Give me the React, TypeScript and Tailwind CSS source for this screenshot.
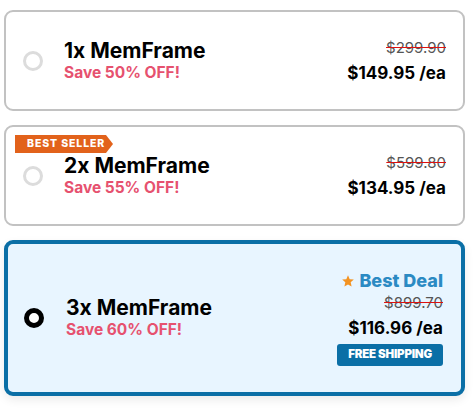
import React from "react";

type Offer = {
  qty: string;
  save: string;
  was: string;
  price: string;
  badge?: boolean;
  best?: boolean;
};

const offers: Offer[] = [
  { qty: "1x MemFrame", save: "Save 50% OFF!", was: "$299.90", price: "$149.95" },
  { qty: "2x MemFrame", save: "Save 55% OFF!", was: "$599.80", price: "$134.95", badge: true },
  { qty: "3x MemFrame", save: "Save 60% OFF!", was: "$899.70", price: "$116.96", best: true },
];

const Star = () => (
  <svg width="14" height="14" viewBox="0 0 24 24" className="mr-[4px]">
    <path d="M12 2l2.9 6.9 7.1.6-5.4 4.7 1.6 7.3L12 17.8 5.8 21.5l1.6-7.3L2 9.5l7.1-.6z" fill="#f39322" />
  </svg>
);

const OfferCard = ({ offer }: { offer: Offer }) => {
  const selected = !!offer.best;
  return (
    <div
      className={
        selected
          ? "relative flex h-[156px] items-center rounded-[9px] border-[4px] border-[#0b6fa6] bg-[#e8f5ff] pl-[16px] pr-[18px] shadow-[0_4px_10px_rgba(0,0,0,0.08)]"
          : "relative flex h-[101px] items-center rounded-[9px] border-2 border-[#c2c2c2] bg-white pl-[17px] pr-[17px]"
      }
    >
      {offer.badge && (
        <div className="absolute left-[9px] top-[8px] flex h-[18px] w-[98px] items-center bg-[#e2621b] pl-[12px] text-[10.5px] font-extrabold tracking-[0.9px] text-white [clip-path:polygon(0_0,91px_0,98px_50%,91px_100%,0_100%)]">
          BEST SELLER
        </div>
      )}
      <div
        className={
          selected
            ? "h-[20px] w-[20px] shrink-0 rounded-full border-[5px] border-black bg-white"
            : "h-[20px] w-[20px] shrink-0 rounded-full border-[3px] border-[#dcdcdc] bg-white"
        }
      />
      <div className={selected ? "ml-[22px] flex flex-col" : "ml-[21px] flex flex-col"}>
        <div className="text-[21px] font-bold leading-[24px] text-black">{offer.qty}</div>
        <div className="text-[15.5px] font-bold leading-[20px] text-[#e6516f]">{offer.save}</div>
      </div>
      <div className="ml-auto flex flex-col items-end">
        {offer.best && (
          <div className="flex items-center text-[18px] font-extrabold leading-[22px] text-[#2b8ac3]">
            <Star />
            Best Deal
          </div>
        )}
        <div className="text-[15px] leading-[22px] text-[#555] line-through decoration-[#d11]">{offer.was}</div>
        <div className="mt-[3px] text-[17px] font-bold leading-[22px] text-black">
          {offer.price} /ea
        </div>
        {offer.best && (
          <div className="mt-[5px] flex h-[22px] items-center rounded-[3px] bg-[#0b6fa6] px-[11px] text-[11.5px] font-black tracking-[-0.2px] text-white">
            FREE SHIPPING
          </div>
        )}
      </div>
    </div>
  );
};

const App = () => {
  return (
    <div
      className="flex min-h-[408px] w-[474px] flex-col gap-[14px] bg-white pl-[4px] pt-[10px]"
      style={{ fontFamily: "Inter, 'Noto Sans', sans-serif" }}
    >
      {offers.map((o) => (
        <div key={o.qty} className="w-[461px]">
          <OfferCard offer={o} />
        </div>
      ))}
    </div>
  );
};

export default App;
